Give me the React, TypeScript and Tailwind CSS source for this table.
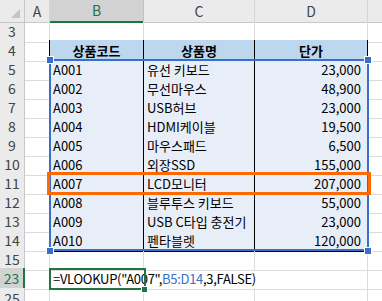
import React from "react";

// Spreadsheet view: product table with a VLOOKUP formula being edited
// ━━━━━━━━━━━━━━━━━━━━━━━━━━━━━━━━━━━━━━━━━━━━━━━━━━━━━━━━━━━━━━━━━━━━━━

const cols = "grid grid-cols-[25px_25px_94px_111px_113px_1fr]";
const font = "font-['Noto_Sans_CJK_KR','Noto_Sans',sans-serif]";

const products = [
  ["A001", "유선 키보드", "23,000"],
  ["A002", "무선마우스", "48,900"],
  ["A003", "USB허브", "23,000"],
  ["A004", "HDMI케이블", "19,500"],
  ["A005", "마우스패드", "6,500"],
  ["A006", "외장SSD", "155,000"],
  ["A007", "LCD모니터", "207,000"],
  ["A008", "블루투스 키보드", "55,000"],
  ["A009", "USB C타입 충전기", "23,000"],
  ["A010", "펜타블렛", "120,000"],
];

function RowNum({ n, active = false }: { n: number; active?: boolean }) {
  return (
    <div
      className={`flex items-center justify-center border-b border-b-[#d4d4d4] text-[14px] ${
        active
          ? "bg-[#d2d2d2] text-[#217346] border-r-2 border-r-[#217346]"
          : "bg-[#ebebeb] text-[#444] border-r border-r-[#c8c8c8]"
      }`}
    >
      {n}
    </div>
  );
}

const grid = "border-r border-b border-[#dcdcdc]";
const cell = "border-r border-b border-black flex items-center px-[3px] text-[13px] text-black whitespace-nowrap overflow-hidden";
const colHead = "flex items-center justify-center bg-[#ebebeb] border-r border-b border-r-[#d4d4d4] border-b-[#c8c8c8] text-[14px] text-[#444]";

export default function App() {
  return (
    <div className={`relative w-[382px] h-[301px] overflow-hidden bg-white ${font}`}>
      {/* column headers */}
      <div className={`${cols} h-[21px]`}>
        <div className="relative bg-[#ebebeb] border-r border-b border-[#c8c8c8]">
          <svg className="absolute right-[4px] bottom-[4px]" width="9" height="9" viewBox="0 0 9 9">
            <path d="M9 0 L9 9 L0 9 Z" fill="#c4c4c4" />
          </svg>
        </div>
        <div className={colHead}>A</div>
        <div className="flex items-center justify-center bg-[#d2d2d2] border-r border-r-[#c0c0c0] border-b-2 border-b-[#217346] text-[14px] text-[#217346]">B</div>
        <div className={colHead}>C</div>
        <div className={colHead}>D</div>
        <div className="bg-[#ebebeb] border-b border-[#c8c8c8]" />
      </div>

      {/* row 3 */}
      <div className={`${cols} h-[19px]`}>
        <RowNum n={3} />
        <div className={grid} />
        <div className="border-r border-r-[#dcdcdc] border-b border-b-black" />
        <div className="border-r border-r-[#dcdcdc] border-b border-b-black" />
        <div className="border-r border-r-[#dcdcdc] border-b border-b-black" />
        <div className="border-b border-[#dcdcdc]" />
      </div>

      {/* row 4: table header */}
      <div className={`${cols} h-[19px]`}>
        <RowNum n={4} />
        <div className="border-r border-r-black border-b border-b-[#dcdcdc]" />
        <div className={`${cell} justify-center font-bold bg-[#bdd7ee]`}>상품코드</div>
        <div className={`${cell} justify-center font-bold bg-[#bdd7ee]`}>상품명</div>
        <div className={`${cell} justify-center font-bold bg-[#bdd7ee]`}>단가</div>
        <div className="border-b border-[#dcdcdc]" />
      </div>

      {/* rows 5-14: data */}
      {products.map(([code, name, price], i) => (
        <div key={code} className={`${cols} h-[19px]`}>
          <RowNum n={i + 5} />
          <div className="border-r border-r-black border-b border-b-[#dcdcdc]" />
          <div className={`${cell} bg-[#e7eef8]`}>{code}</div>
          <div className={`${cell} bg-[#e7eef8]`}>{name}</div>
          <div className={`${cell} justify-end pr-[6px] bg-[#e7eef8]`}>{price}</div>
          <div className="border-b border-[#dcdcdc]" />
        </div>
      ))}

      {/* row 15 */}
      <div className={`${cols} h-[19px]`}>
        <RowNum n={15} />
        <div className={grid} />
        <div className={grid} />
        <div className={grid} />
        <div className={grid} />
        <div className="border-b border-[#dcdcdc]" />
      </div>

      {/* row 23: formula */}
      <div className={`${cols} h-[20px]`}>
        <RowNum n={23} active />
        <div className={grid} />
        <div className="relative z-10 flex items-center px-[3px] text-[13px] tracking-[-0.3px] text-black whitespace-nowrap">
          =VLOOKUP("A007",<span className="text-[#3a6fc9]">B5:D14</span>,3,FALSE)
          <span className="inline-block w-px h-[15px] bg-black ml-[2px]" />
        </div>
        <div className="border-b border-[#dcdcdc]" />
        <div className={grid} />
        <div className="border-b border-[#dcdcdc]" />
      </div>

      {/* row 25 */}
      <div className={`${cols} h-[20px]`}>
        <RowNum n={25} />
        <div className={grid} />
        <div className={grid} />
        <div className={grid} />
        <div className={grid} />
        <div className="border-b border-[#dcdcdc]" />
      </div>

      {/* range reference B5:D14 */}
      <div className="absolute left-[49px] top-[59px] w-[320px] h-[192px] border-2 border-[#3a6fc9] pointer-events-none" />
      <div className="absolute left-[47px] top-[57px] w-[6px] h-[6px] bg-[#3a6fc9] outline outline-1 outline-white" />
      <div className="absolute left-[365px] top-[57px] w-[6px] h-[6px] bg-[#3a6fc9] outline outline-1 outline-white" />
      <div className="absolute left-[47px] top-[248px] w-[6px] h-[6px] bg-[#3a6fc9] outline outline-1 outline-white" />
      <div className="absolute left-[365px] top-[248px] w-[6px] h-[6px] bg-[#3a6fc9] outline outline-1 outline-white" />

      {/* highlighted lookup row */}
      <div className="absolute left-[47px] top-[172px] w-[324px] h-[23px] border-[3px] border-[#ff6a00] pointer-events-none" />

      {/* active cell B23 */}
      <div className="absolute left-[49px] top-[268px] w-[97px] h-[22px] border-2 border-[#217346] pointer-events-none z-20" />
      <div className="absolute left-[142px] top-[287px] w-[5px] h-[5px] bg-[#217346] outline outline-1 outline-white z-20" />
    </div>
  );
}
